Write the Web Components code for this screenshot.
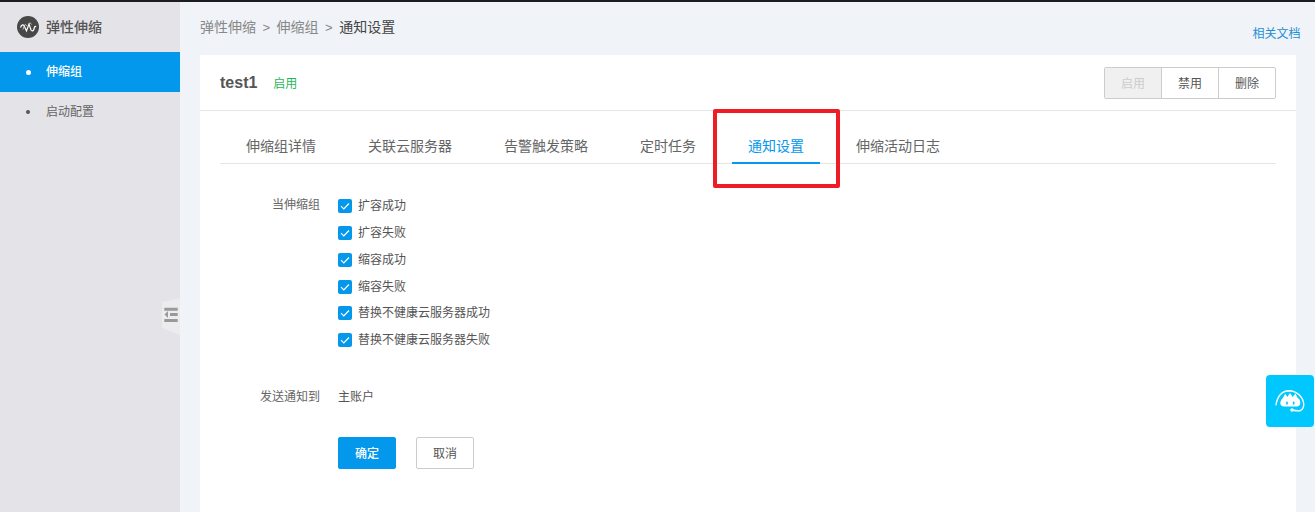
<!DOCTYPE html>
<html lang="zh">
<head>
<meta charset="utf-8">
<title>通知设置</title>
<style>
    html, body { margin: 0; height: 100%; overflow: hidden; }
    body {
        font-family: "Liberation Sans", "Noto Sans CJK SC", sans-serif;
        font-size: 12px;
        color: #555;
        background: #f0f3f7;
    }
</style>
</head>
<body>
<console-app></console-app>

<script>
const FONT = '"Liberation Sans", "Noto Sans CJK SC", sans-serif';

class SideNav extends HTMLElement {
    constructor() {
        super();
        this.attachShadow({ mode: 'open' });
        this.shadowRoot.innerHTML = `
            <style>
                :host { display: block; width: 180px; flex: none; background: #e4e3e8; position: relative; }
                .title { display: flex; align-items: center; gap: 7px; height: 50px; padding-left: 17px; font-size: 14px; font-weight: 500; color: #555; line-height: 20px; }
                .logo { width: 22px; height: 22px; flex: none; }
                .item { display: flex; align-items: center; height: 40px; font-size: 12px; line-height: 18px; color: #666; }
                .item i { width: 4px; height: 4px; border-radius: 50%; background: #555; margin: 0 16px 0 26px; }
                .item.on { background: #0398ec; color: #fff; font-weight: 500; }
                .item.on i { background: #fff; width: 5px; height: 5px; margin: 0 15.5px 0 25.5px; }
                .collapse { position: absolute; left: 162px; top: 296px; width: 18px; height: 37px; }
            </style>
            <div class="title">
                <svg class="logo" viewBox="0 0 22 22">
                    <circle cx="11" cy="11" r="11" fill="#484848"/>
                    <path d="M3.500 11.500C4.500 8.500 6.500 8 7.500 10.500L9.500 15 12 8l2 6c1 1.500 2.500 1 3-1s1-3.500 2-2" fill="none" stroke="#fff" stroke-width="1.200"/>
                    <path d="M6 13.500 7.500 9c.8-1 1.500-.5 2 1M12 8c1-1.500 2-1 2.500.5" fill="none" stroke="#ddd" stroke-width=".8"/>
                </svg>
                <span>弹性伸缩</span>
            </div>
            <div class="item on"><i></i><span>伸缩组</span></div>
            <div class="item"><i></i><span>启动配置</span></div>
            <svg class="collapse" viewBox="0 0 18 37">
                <path d="M0 4 18 0V37L0 30Z" fill="#ecebee"/>
                <path d="M2.300 9.700h13.400v3H2.300zM8 15h7.700v3H8zM2.300 21h13.400v3H2.300z" fill="#999"/>
                <path d="M6 13v7l-3.500-3.500z" fill="#999"/>
            </svg>
        `;
    }
}

class BreadCrumb extends HTMLElement {
    constructor() {
        super();
        this.attachShadow({ mode: 'open' });
        this.shadowRoot.innerHTML = `
            <style>
                :host { display: flex; justify-content: space-between; height: 53px; box-sizing: border-box; font-size: 14px; line-height: 20px; color: #888; }
                .path { padding-top: 15px; }
                .path b { font-weight: 400; color: #444; }
                .sep { margin: 0 6.500px; font-size: 13px; }
                a { font-size: 12px; color: #1b8fd8; text-decoration: none; padding-top: 22px; margin-right: -4.500px; }
            </style>
            <div class="path">弹性伸缩<span class="sep">&gt;</span>伸缩组<span class="sep">&gt;</span><b>通知设置</b></div>
            <a href="#">相关文档</a>
        `;
    }
}

class CardHeader extends HTMLElement {
    constructor() {
        super();
        this.attachShadow({ mode: 'open' });
        this.shadowRoot.innerHTML = `
            <style>
                :host { display: flex; align-items: center; height: 56px; box-sizing: border-box; padding: 0 20px; border-bottom: 1px solid #e6e6e6; }
                .name { font-size: 16px; font-weight: 700; color: #555; line-height: 22px; }
                .state { margin-left: 16px; font-size: 12px; color: #1fb85a; line-height: 18px; position: relative; top: 1px; }
                .group { margin-left: auto; display: flex; height: 32px; box-sizing: border-box; border: 1px solid #ccc; border-radius: 2px; }
                .group span { display: flex; align-items: center; justify-content: center; box-sizing: border-box; width: 57px; font-size: 12px; color: #555; }
                .group span + span { border-left: 1px solid #ccc; }
                .group .off { width: 56px; background: #f0f0f0; color: #ccc; }
            </style>
            <span class="name">test1</span>
            <span class="state">启用</span>
            <div class="group"><span class="off">启用</span><span>禁用</span><span>删除</span></div>
        `;
    }
}

class TabBar extends HTMLElement {
    constructor() {
        super();
        this.attachShadow({ mode: 'open' });
    }

    connectedCallback() {
        const names = this.getAttribute('data-names').split(',');
        const current = this.getAttribute('data-current');
        const tabs = names.map(name => `<div class="tab ${name === current ? 'on' : ''}">${name}</div>`).join('');
        this.shadowRoot.innerHTML = `
            <style>
                :host { display: flex; gap: 20px; height: 53px; box-sizing: border-box; margin: 0 20px; padding-left: 10px; border-bottom: 1px solid #e6e6e6; }
                .tab { height: 53px; box-sizing: border-box; padding: 0 16px; font-size: 14px; line-height: 70px; color: #666; white-space: nowrap; }
                .tab.on { color: #0398ec; border-bottom: 2px solid #0398ec; }
            </style>
            ${tabs}
        `;
    }
}

class CheckRow extends HTMLElement {
    constructor() {
        super();
        this.attachShadow({ mode: 'open' });
        this.shadowRoot.innerHTML = `
            <style>
                :host { display: flex; align-items: center; height: 27px; gap: 6px; font-size: 12px; color: #555; line-height: 18px; }
                svg { width: 14px; height: 14px; flex: none; }
            </style>
            <svg viewBox="0 0 14 14">
                <rect width="14" height="14" rx="2" fill="#0398ec"/>
                <path d="M3 7.200 5.800 10 11 4.500" fill="none" stroke="#fff" stroke-width="1.200"/>
            </svg>
            <slot></slot>
        `;
    }
}

class FormRow extends HTMLElement {
    constructor() {
        super();
        this.attachShadow({ mode: 'open' });
        this.shadowRoot.innerHTML = `
            <style>
                :host { display: grid; grid-template-columns: 100px 1fr; column-gap: 18px; font-size: 12px; line-height: 18px; color: #555; }
                .label { text-align: right; color: #666; padding-top: var(--label-top, 0); }
            </style>
            <div class="label"><slot name="label"></slot></div>
            <div><slot></slot></div>
        `;
    }
}

class ActionButton extends HTMLElement {
    constructor() {
        super();
        this.attachShadow({ mode: 'open' });
        this.shadowRoot.innerHTML = `
            <style>
                :host { display: flex; align-items: center; justify-content: center; width: 58px; height: 32px; box-sizing: border-box; padding-top: 1px; border: 1px solid #ccc; border-radius: 2px; font-size: 12px; color: #555; background: #fff; }
                :host([primary]) { background: #0398ec; border-color: #0398ec; color: #fff; font-weight: 500; }
            </style>
            <slot></slot>
        `;
    }
}

class NoticeForm extends HTMLElement {
    constructor() {
        super();
        this.attachShadow({ mode: 'open' });
        this.shadowRoot.innerHTML = `
            <style>
                :host { display: block; padding: 28px 0 0 20px; font-family: ${FONT}; }
                .send { margin-top: 35px; }
                .send span.value { color: #555; }
                .actions { display: flex; gap: 20px; margin-top: 31px; }
                form-row.first { --label-top: 4px; }
                check-row:nth-of-type(n+5) { height: 26.500px; }
            </style>
            <form-row class="first">
                <span slot="label">当伸缩组</span>
                <check-row>扩容成功</check-row>
                <check-row>扩容失败</check-row>
                <check-row>缩容成功</check-row>
                <check-row>缩容失败</check-row>
                <check-row>替换不健康云服务器成功</check-row>
                <check-row>替换不健康云服务器失败</check-row>
            </form-row>
            <form-row class="send">
                <span slot="label">发送通知到</span>
                <span class="value">主账户</span>
            </form-row>
            <form-row>
                <span slot="label"></span>
                <div class="actions">
                    <action-button primary>确定</action-button>
                    <action-button>取消</action-button>
                </div>
            </form-row>
        `;
    }
}

class FloatHelp extends HTMLElement {
    constructor() {
        super();
        this.attachShadow({ mode: 'open' });
        this.shadowRoot.innerHTML = `
            <style>
                :host { position: absolute; left: 1266px; top: 375px; width: 48px; height: 52px; border-radius: 4px; background: #00c8ff; display: flex; align-items: center; justify-content: center; }
                svg { width: 30px; height: 28px; }
            </style>
            <svg viewBox="0 0 30 28">
                <path d="M1 17.700C2.500 9 7.500 4 14 3.700 22 4 28 10 28.700 17c.2 3-1.200 5.500-3.400 6.700-2 .3-5 0-8.300-.7" fill="none" stroke="#fff" stroke-width="1.400" stroke-linecap="round"/>
                <circle cx="17" cy="23" r="1.700" fill="#fff"/>
                <path d="M5.300 16.500c0-2.500 1-4 2.200-5l2.800-4.700 2 3.200L15 6l2.700 4 2.800-3.500 1.800 4c2 1 3 3 3 5.500 0 2-1.500 3.500-3.500 3.500H9c-2.200 0-3.700-1.300-3.700-3.500Z" fill="#fff"/>
                <rect x="11.200" y="14.500" width="1.600" height="3.200" rx=".8" fill="#00c8ff"/>
                <rect x="17.900" y="14.500" width="1.600" height="3.200" rx=".8" fill="#00c8ff"/>
            </svg>
        `;
    }
}

class ConsoleApp extends HTMLElement {
    constructor() {
        super();
        this.attachShadow({ mode: 'open' });
        this.shadowRoot.innerHTML = `
            <style>
                :host { display: flex; flex-direction: column; height: 100vh; overflow: hidden; position: relative; font-family: ${FONT}; }
                .topline { height: 2px; flex: none; background: #1d1d1f; }
                .body { flex: 1; display: flex; min-height: 0; }
                .main { flex: 1; padding: 0 19px 0 20px; background: #f0f3f7; min-width: 0; }
                .card { background: #fff; height: 600px; }
                .mark { position: absolute; left: 713px; top: 109px; width: 127px; height: 79px; box-sizing: border-box; border: 4px solid #ee1c25; border-radius: 2px; pointer-events: none; }
            </style>
            <div class="topline"></div>
            <div class="body">
                <side-nav></side-nav>
                <div class="main">
                    <bread-crumb></bread-crumb>
                    <div class="card">
                        <card-header></card-header>
                        <tab-bar data-names="伸缩组详情,关联云服务器,告警触发策略,定时任务,通知设置,伸缩活动日志" data-current="通知设置"></tab-bar>
                        <notice-form></notice-form>
                    </div>
                </div>
            </div>
            <div class="mark"></div>
            <float-help></float-help>
        `;
    }
}

customElements.define('side-nav', SideNav);
customElements.define('bread-crumb', BreadCrumb);
customElements.define('card-header', CardHeader);
customElements.define('tab-bar', TabBar);
customElements.define('check-row', CheckRow);
customElements.define('form-row', FormRow);
customElements.define('action-button', ActionButton);
customElements.define('notice-form', NoticeForm);
customElements.define('float-help', FloatHelp);
customElements.define('console-app', ConsoleApp);
</script>
</body>
</html>
